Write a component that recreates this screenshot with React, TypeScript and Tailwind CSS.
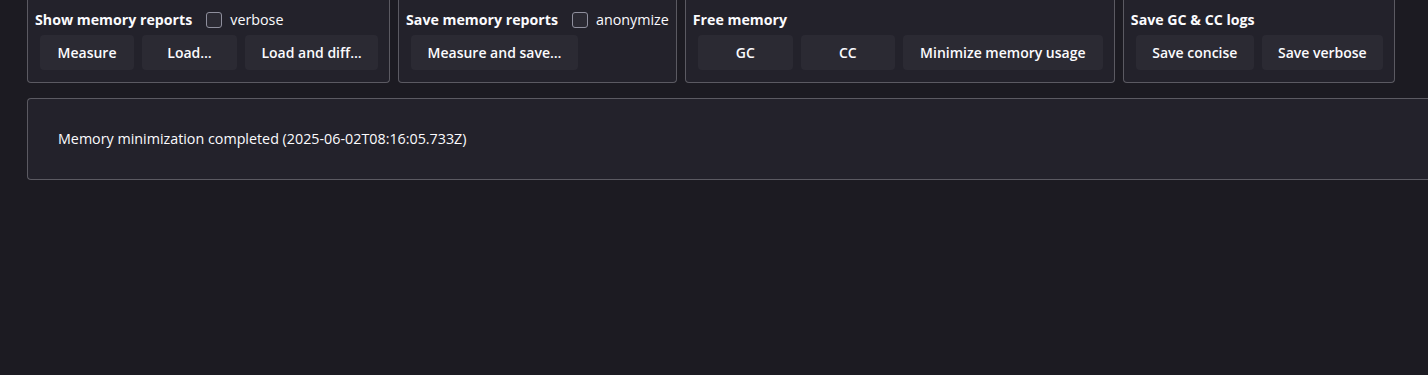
import React from 'react';

const font = { fontFamily: '"Open Sans", "Noto Sans", sans-serif' };

function Btn({ children, w }: { children: React.ReactNode; w: string }) {
  return (
    <button
      className={`h-[35px] ${w} rounded-[4px] bg-[#2b2a33] text-[#fbfbfe] text-[14px] font-semibold`}
    >
      {children}
    </button>
  );
}

function Check({ label }: { label: string }) {
  return (
    <label className="flex items-center ml-[14px] gap-[8px] font-normal text-[14.3px]">
      <span className="w-[16px] h-[16px] rounded-[3px] border border-[#8f8f9d] bg-[#2b2a33]" />
      <span>{label}</span>
    </label>
  );
}

function Section({
  title,
  check,
  children,
}: {
  title: string;
  check?: string;
  children: React.ReactNode;
}) {
  return (
    <div className="border border-t-0 border-[#5b5a62] rounded-b-[4px] bg-[#23222b] px-[7px] pt-[10px] pb-[12px]">
      <div className="flex items-center h-[20px] text-[14.2px] font-bold">
        <span>{title}</span>
        {check && <Check label={check} />}
      </div>
      <div className="flex gap-[8px] mt-[5px] ml-[5px] mr-[4px]">{children}</div>
    </div>
  );
}

export default function App() {
  return (
    <div className="min-h-[375px] bg-[#1c1b22] text-[#fbfbfe] pl-[27px]" style={font}>
      <div className="flex gap-[8px] items-start">
        <Section title="Show memory reports" check="verbose">
          <Btn w="w-[94px]">Measure</Btn>
          <Btn w="w-[95px]">Load…</Btn>
          <Btn w="w-[133px]">Load and diff…</Btn>
        </Section>
        <Section title="Save memory reports" check="anonymize">
          <Btn w="w-[167px]">Measure and save…</Btn>
        </Section>
        <Section title="Free memory">
          <Btn w="w-[95px]">GC</Btn>
          <Btn w="w-[94px]">CC</Btn>
          <Btn w="w-[200px]">Minimize memory usage</Btn>
        </Section>
        <Section title="Save GC &amp; CC logs">
          <Btn w="w-[118px]">Save concise</Btn>
          <Btn w="w-[121px]">Save verbose</Btn>
        </Section>
      </div>
      <div className="mt-[15px] h-[82px] border border-r-0 border-[#5b5a62] rounded-l-[4px] bg-[#23222b] flex items-center pl-[30px] text-[14.3px]">
        Memory minimization completed (2025-06-02T08:16:05.733Z)
      </div>
    </div>
  );
}
